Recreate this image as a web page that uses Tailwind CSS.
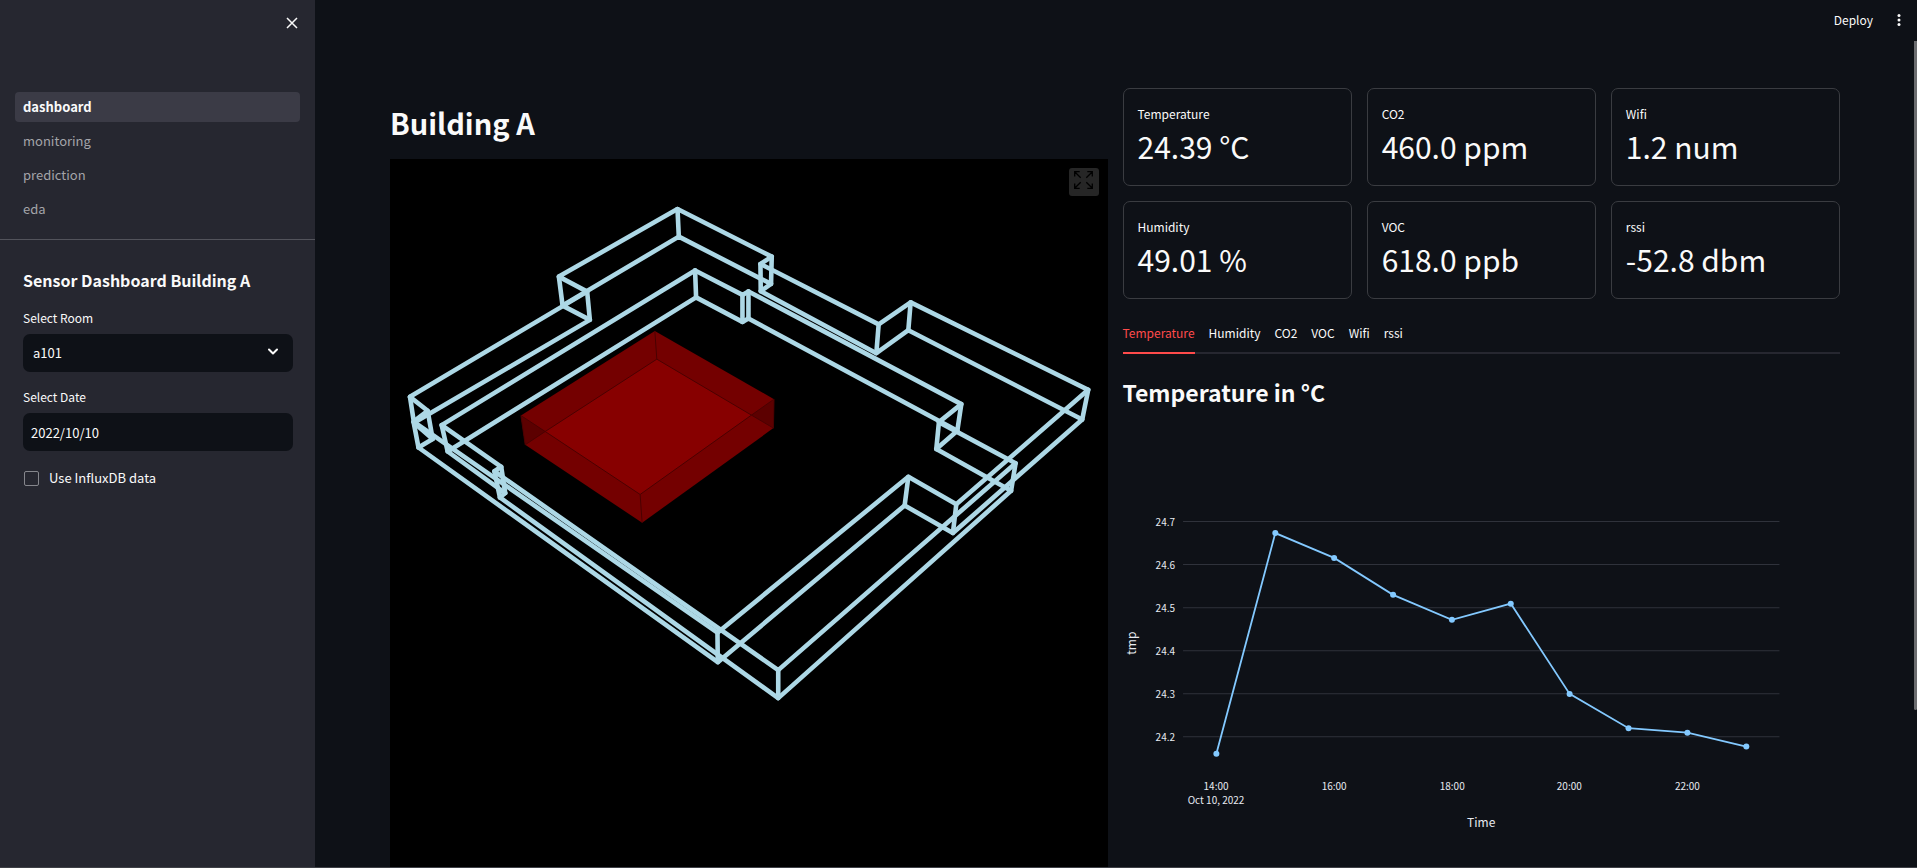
<!DOCTYPE html>
<html lang="en">
<head>
<meta charset="utf-8">
<meta name="viewport" content="width=device-width, initial-scale=1">
<title>Sensor Dashboard</title>
<script src="https://cdn.jsdelivr.net/npm/@tailwindcss/browser@4"></script>
</head>
<body class="h-screen overflow-hidden bg-[#0e1117] font-['Noto_Sans_CJK_SC','Noto_Sans',sans-serif] text-[#fafafa]">
<div class="flex h-full border-b border-[#3f4147]">

  <!-- Sidebar -->
  <aside class="w-[315px] shrink-0 bg-[#262730]">
    <div class="flex h-[92px] items-start justify-end p-3">
      <button type="button" aria-label="Close sidebar" class="flex size-[22px] items-center justify-center">
        <svg class="size-3" viewBox="0 0 12 12" fill="none" stroke="#fafafa" stroke-width="1.5"><path d="M1 1l10 10M11 1L1 11"/></svg>
      </button>
    </div>
    <nav class="flex flex-col gap-1 px-[15px] text-[13px] leading-[30px]">
      <a href="#dashboard" aria-current="page" class="rounded bg-[#3b3b46] px-2 font-bold">dashboard</a>
      <a href="#monitoring" class="rounded px-2 text-[#a3a4a9]">monitoring</a>
      <a href="#prediction" class="rounded px-2 text-[#a3a4a9]">prediction</a>
      <a href="#eda" class="rounded px-2 text-[#a3a4a9]">eda</a>
    </nav>
    <hr class="mt-[15px] border-[#52535b]">
    <form class="flex flex-col pr-[22px] pl-[23px]">
      <h2 class="mt-7 text-[16px] leading-6 font-bold">Sensor Dashboard Building A</h2>
      <label for="room" class="mt-4 text-[12px] leading-5">Select Room</label>
      <div class="relative mt-[6px] flex">
        <select id="room" class="h-[38px] w-full appearance-none rounded-[7px] bg-[#0e1117] px-[10px] text-[13px]">
          <option>a101</option>
        </select>
        <svg class="pointer-events-none absolute top-[14px] right-[15px] h-2 w-[10px]" viewBox="0 0 10 8" fill="none" stroke="#fafafa" stroke-width="2" stroke-linecap="round" stroke-linejoin="round"><path d="M1 1.5l4 4 4-4"/></svg>
      </div>
      <label for="date" class="mt-[15px] text-[12px] leading-5">Select Date</label>
      <input id="date" type="text" value="2022/10/10" class="mt-[6px] h-[38px] w-full rounded-[7px] bg-[#0e1117] px-2 text-[13px]">
      <div class="mt-4 flex items-center pl-px">
        <input id="influx" type="checkbox" class="size-[15px] appearance-none rounded-[2px] border border-[#85868c]">
        <label for="influx" class="pl-[10px] text-[13px] leading-[22px]">Use InfluxDB data</label>
      </div>
    </form>
  </aside>

  <!-- Main area -->
  <main class="relative flex min-w-0 flex-1 flex-col">
    <header class="flex h-10 shrink-0 items-center justify-end gap-5 pr-3">
      <button type="button" class="text-[12px] leading-5">Deploy</button>
      <button type="button" aria-label="Menu" class="flex w-3 justify-center">
        <svg class="h-3 w-1" viewBox="0 0 4 12" fill="#fafafa"><circle cx="2" cy="1.5" r="1.5"/><circle cx="2" cy="6" r="1.5"/><circle cx="2" cy="10.5" r="1.5"/></svg>
      </button>
    </header>
    <div class="absolute top-[41px] right-0 h-[669px] w-[3px] rounded-b-sm bg-[#6c6d70]"></div>

    <div class="grid min-h-0 flex-1 grid-cols-2 gap-[15px] pt-12 pr-[77px] pl-[75px]">
      <section class="flex min-h-0 flex-col">
        <h1 class="pt-[14px] pb-[17px] text-[29px] leading-10 font-bold">Building A</h1>
        <div class="relative min-h-0 flex-1 overflow-hidden bg-black">
          <svg class="w-full" viewBox="390 159 718 709" role="img" aria-label="3D model of building A">
            <!-- selected room -->
            <g stroke="#4a0000" stroke-width="1" stroke-linejoin="round">
              <path fill="#740000" stroke="none" d="M655 331L774.3 399.3 773.7 428.3 642.3 523 525.3 445 521 415.7z"/>
              <path fill="#870000" d="M657 359.3L751.7 415.3 640.3 494.7 545.3 431.7z"/>
              <path fill="#5c0000" d="M521 415.7L545.3 431.7 525.3 445zM774.3 399.3L751.7 415.3 773.7 428.3z"/>
              <path fill="none" d="M655 331L657 359.3M640.3 494.7L642.3 523"/>
            </g>
            <!-- walls -->
            <g fill="none" stroke="#add8e6" stroke-width="4.6" stroke-linejoin="round" stroke-linecap="round">
              <path d="M677.7 209L772 256.7 760.7 264 879 324.5 911 302.5 1088.7 390 956.7 504.5 908.7 477 717.7 633 413.5 421.7 427.7 411 410 397 587.3 291.7 559 276.7z"/>
              <path d="M494.5 471.5L501.3 467 441.7 425.3 695.3 270.5 742.7 295 748.7 291.5 961.7 404.3 939.3 422.3 1016 463.5 778.5 670.5z"/>
              <path d="M679 236.7L771.3 284 761 291.3 876.7 353.3 908.7 330.3 1082.7 419.7 953.3 533.3 905 505.7 718 662.5 418.5 447.7 432.7 439.3 414 423 590 320 562.7 305.7z"/>
              <path d="M500 497.7L505.3 493.3 447.7 451.7 696.3 297.5 742.7 322 748.7 318.7 957.7 431 936.7 449.3 1011.5 491 778.5 698.5z"/>
              <path d="M677.7 209L679 236.7M772 256.7L771.3 284M760.7 264L761 291.3M879 324.5L876.7 353.3M911 302.5L908.7 330.3M1088.7 390L1082.7 419.7M956.7 504.5L953.3 533.3M908.7 477L905 505.7M717.7 633L718 662.5M494.5 471.5L500 497.7M501.3 467L505.3 493.3M441.7 425.3L447.7 451.7M695.3 270.5L696.3 297.5M742.7 295V322M748.7 291.5V318.7M961.7 404.3L957.7 431M939.3 422.3L936.7 449.3M1016 463.5L1011.5 491M778.5 670.5V698.5M413.5 421.7L418.5 447.7M427.7 411L432.7 439.3M410 397L414 423M587.3 291.7L590 320M559 276.7L562.7 305.7"/>
            </g>
          </svg>
          <button type="button" aria-label="View fullscreen" class="absolute top-[9px] right-[9px] flex h-7 w-[30px] justify-center rounded-[3px] bg-[#262626] pt-[3px]">
            <svg class="h-[18px] w-[19px]" viewBox="0 0 19 18" fill="none" stroke="#000" stroke-width="1.3"><path d="M.7 5.5V.7h5M.7.7l6 6M13.3.7h5v4.8M18.3.7l-6 6M.7 12.5v4.8h5M.7 17.3l6-6M13.3 17.3h5v-4.8M18.3 17.3l-6-6"/></svg>
          </button>
        </div>
      </section>

      <section class="min-h-0">
        <dl class="grid grid-cols-3 gap-[15px]">
          <div class="rounded-[7px] border border-[#3a3c41] px-[14px] pt-[15px] pb-[17px]"><dt class="text-[12px] leading-5">Temperature</dt><dd class="text-[30px] leading-[44px]">24.39 °C</dd></div>
          <div class="rounded-[7px] border border-[#3a3c41] px-[14px] pt-[15px] pb-[17px]"><dt class="text-[12px] leading-5">CO2</dt><dd class="text-[30px] leading-[44px]">460.0 ppm</dd></div>
          <div class="rounded-[7px] border border-[#3a3c41] px-[14px] pt-[15px] pb-[17px]"><dt class="text-[12px] leading-5">Wifi</dt><dd class="text-[30px] leading-[44px]">1.2 num</dd></div>
          <div class="rounded-[7px] border border-[#3a3c41] px-[14px] pt-[15px] pb-[17px]"><dt class="text-[12px] leading-5">Humidity</dt><dd class="text-[30px] leading-[44px]">49.01 %</dd></div>
          <div class="rounded-[7px] border border-[#3a3c41] px-[14px] pt-[15px] pb-[17px]"><dt class="text-[12px] leading-5">VOC</dt><dd class="text-[30px] leading-[44px]">618.0 ppb</dd></div>
          <div class="rounded-[7px] border border-[#3a3c41] px-[14px] pt-[15px] pb-[17px]"><dt class="text-[12px] leading-5">rssi</dt><dd class="text-[30px] leading-[44px]">-52.8 dbm</dd></div>
        </dl>

        <div role="tablist" class="mt-[15px] flex gap-[14px] text-[12px] leading-[38px] shadow-[inset_0_-2px_0_#262730]">
          <button type="button" role="tab" aria-selected="true" class="border-b-2 border-[#ff4b4b] text-[#ff4b4b]">Temperature</button>
          <button type="button" role="tab" class="border-b-2 border-transparent">Humidity</button>
          <button type="button" role="tab" class="border-b-2 border-transparent">CO2</button>
          <button type="button" role="tab" class="border-b-2 border-transparent">VOC</button>
          <button type="button" role="tab" class="border-b-2 border-transparent">Wifi</button>
          <button type="button" role="tab" class="border-b-2 border-transparent">rssi</button>
        </div>

        <h2 class="mt-[22px] text-[23px] leading-8 font-bold">Temperature in °C</h2>
        <svg class="w-full" viewBox="1123 408 717 459" role="img" aria-label="Line chart of temperature over time">
          <path stroke="#2f323b" d="M1183 521.5h596M1183 564.5h596M1183 607.5h596M1183 650.5h596M1183 693.5h596M1183 736.5h596"/>
          <g fill="#e6eaf1" font-size="10" text-anchor="end">
            <text x="1175" y="526">24.7</text>
            <text x="1175" y="569">24.6</text>
            <text x="1175" y="612">24.5</text>
            <text x="1175" y="655">24.4</text>
            <text x="1175" y="698">24.3</text>
            <text x="1175" y="741">24.2</text>
          </g>
          <g fill="#e6eaf1" font-size="10" text-anchor="middle">
            <text x="1216" y="790">14:00</text>
            <text x="1216" y="804">Oct 10, 2022</text>
            <text x="1334" y="790">16:00</text>
            <text x="1452" y="790">18:00</text>
            <text x="1569" y="790">20:00</text>
            <text x="1687" y="790">22:00</text>
          </g>
          <g fill="#e6eaf1" font-size="12" text-anchor="middle">
            <text x="1481" y="827">Time</text>
            <text transform="translate(1136 643) rotate(-90)">tmp</text>
          </g>
          <path fill="none" stroke="#83c9ff" stroke-width="1.8" d="M1216.3 753.6L1275.2 533 1334 557.8 1392.9 594.7 1451.7 619.7 1510.5 603.5 1569.3 693.7 1628.2 728 1687 732.5 1745.9 746.3"/>
          <g fill="#83c9ff">
            <circle cx="1216.3" cy="753.6" r="3"/><circle cx="1275.2" cy="533" r="3"/><circle cx="1334" cy="557.8" r="3"/><circle cx="1392.9" cy="594.7" r="3"/><circle cx="1451.7" cy="619.7" r="3"/><circle cx="1510.5" cy="603.5" r="3"/><circle cx="1569.3" cy="693.7" r="3"/><circle cx="1628.2" cy="728" r="3"/><circle cx="1687" cy="732.5" r="3"/><circle cx="1745.9" cy="746.3" r="3"/>
          </g>
        </svg>
      </section>
    </div>
  </main>
</div>
</body>
</html>
